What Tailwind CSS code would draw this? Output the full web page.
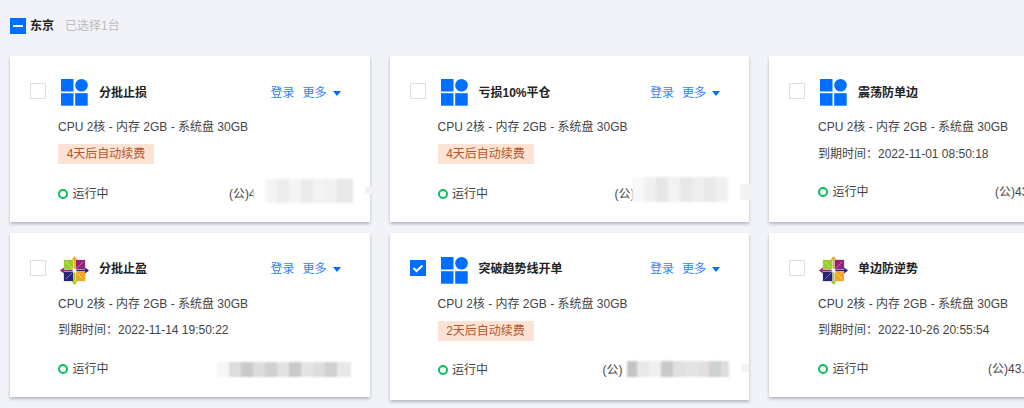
<!DOCTYPE html>
<html lang="zh">
<head>
<meta charset="utf-8">
<script src="https://cdn.jsdelivr.net/npm/@tailwindcss/browser@4"></script>
<title>东京</title>
</head>
<body class="w-[1024px] h-[408px] overflow-hidden bg-[#f1f3f8] font-['Liberation_Sans','Noto_Sans_CJK_SC',sans-serif] text-xs text-[#444]">
<div class="pl-[10px] pt-[18px] w-[1200px]">

  <div class="flex items-center h-4">
    <span class="flex items-center justify-center w-4 h-4 bg-[#006eff]"><span class="w-[10px] h-[2px] bg-white"></span></span>
    <b class="ml-1 font-bold text-[#222]">东京</b>
    <span class="ml-[11px] text-[#bbb]">已选择1台</span>
  </div>

  <div class="flex gap-5 mt-[22px] h-[166px]">
    <!-- card 1 -->
    <div class="w-[359.5px] shrink-0 bg-white shadow-[0_2px_3px_rgba(54,58,80,0.32)]">
      <div class="flex items-start h-[27px] mt-[23px] pl-5 pr-[29px]">
        <span class="mt-1 w-4 h-4 bg-white border border-[#dcdfe8]"></span>
        <svg class="ml-[15px] w-[27px] h-[27px] shrink-0" viewBox="0 0 27 27"><rect width="12.5" height="12.5" fill="#006eff"/><circle cx="20.5" cy="6.300" r="6.300" fill="#006eff"/><rect y="14.200" width="12.5" height="12.5" fill="#006eff"/><rect x="14.200" y="14.200" width="12.5" height="12.5" fill="#006eff"/></svg>
        <div class="flex flex-1 items-center h-5 mt-1 ml-[11px]">
          <b class="font-bold text-[#222]">分批止损</b>
          <span class="ml-auto text-[#2f84ff]">登录</span>
          <span class="ml-2 text-[#2f84ff]">更多</span>
          <svg class="ml-[6px] w-2 h-[5px]" viewBox="0 0 8 5"><path d="M0 0h8L4 5z" fill="#006eff"/></svg>
        </div>
      </div>
      <div class="pl-12 mt-[11px] h-5 leading-5">CPU 2核 - 内存 2GB - 系统盘 30GB</div>
      <div class="ml-12 mt-[7px] w-[96px] h-5 leading-5 text-center bg-[#fde3d3] text-[#b4552d]">4天后自动续费</div>
      <div class="flex items-center pl-12 mt-5 h-5">
        <span class="flex items-center w-[171px]"><span class="w-[10px] h-[10px] rounded-full border-2 border-[#0abf5b]"></span><span class="ml-[4.5px]">运行中</span></span>
        <span class="relative">(公)4
          <span class="absolute left-[24px] top-[-7px] flex w-[100px] h-[24px] bg-white blur-[1px]">
            <span class="w-3 bg-white"></span><span class="w-3 bg-[#f4f4f4]"></span><span class="w-3 bg-[#ececec]"></span><span class="w-3 bg-[#f4f4f4]"></span><span class="w-3 bg-[#ebebeb]"></span><span class="w-3 bg-[#f3f3f3]"></span><span class="w-3 bg-[#f0f0f0]"></span><span class="w-[16px] bg-[#e8e8e8]"></span>
          </span>
          <span class="absolute left-[136px] top-[1px] w-[7px] h-[7px] bg-[#f3f3f3]"></span>
        </span>
      </div>
    </div>
    <!-- card 2 -->
    <div class="w-[359.5px] shrink-0 bg-white shadow-[0_2px_3px_rgba(54,58,80,0.32)]">
      <div class="flex items-start h-[27px] mt-[23px] pl-5 pr-[29px]">
        <span class="mt-1 w-4 h-4 bg-white border border-[#dcdfe8]"></span>
        <svg class="ml-[15px] w-[27px] h-[27px] shrink-0" viewBox="0 0 27 27"><rect width="12.5" height="12.5" fill="#006eff"/><circle cx="20.5" cy="6.300" r="6.300" fill="#006eff"/><rect y="14.200" width="12.5" height="12.5" fill="#006eff"/><rect x="14.200" y="14.200" width="12.5" height="12.5" fill="#006eff"/></svg>
        <div class="flex flex-1 items-center h-5 mt-1 ml-[11px]">
          <b class="font-bold text-[#222]">亏损10%平仓</b>
          <span class="ml-auto text-[#2f84ff]">登录</span>
          <span class="ml-2 text-[#2f84ff]">更多</span>
          <svg class="ml-[6px] w-2 h-[5px]" viewBox="0 0 8 5"><path d="M0 0h8L4 5z" fill="#006eff"/></svg>
        </div>
      </div>
      <div class="pl-12 mt-[11px] h-5 leading-5">CPU 2核 - 内存 2GB - 系统盘 30GB</div>
      <div class="ml-12 mt-[7px] w-[96px] h-5 leading-5 text-center bg-[#fde3d3] text-[#b4552d]">4天后自动续费</div>
      <div class="flex items-center pl-12 mt-5 h-5">
        <span class="flex items-center w-[177px]"><span class="w-[10px] h-[10px] rounded-full border-2 border-[#0abf5b]"></span><span class="ml-[4.5px]">运行中</span></span>
        <span class="relative">(公)
          <span class="absolute left-[17px] top-[-9px] flex w-[96px] h-[25px] bg-white blur-[1px]">
            <span class="w-3 bg-[#f8f8f8]"></span><span class="w-3 bg-[#f0f0f0]"></span><span class="w-3 bg-[#e6e6e6]"></span><span class="w-3 bg-[#f2f2f2]"></span><span class="w-3 bg-[#e8e8e8]"></span><span class="w-3 bg-[#eeeeee]"></span><span class="w-3 bg-[#e9e9e9]"></span><span class="w-3 bg-[#f0f0f0]"></span>
          </span>
          <span class="absolute left-[125px] top-[-2px] w-3 h-[16px] bg-[#f3f3f3]"></span>
        </span>
      </div>
    </div>
    <!-- card 3 -->
    <div class="w-[359.5px] shrink-0 bg-white shadow-[0_2px_3px_rgba(54,58,80,0.32)]">
      <div class="flex items-start h-[27px] mt-[23px] pl-5 pr-[29px]">
        <span class="mt-1 w-4 h-4 bg-white border border-[#dcdfe8]"></span>
        <svg class="ml-[15px] w-[27px] h-[27px] shrink-0" viewBox="0 0 27 27"><rect width="12.5" height="12.5" fill="#006eff"/><circle cx="20.5" cy="6.300" r="6.300" fill="#006eff"/><rect y="14.200" width="12.5" height="12.5" fill="#006eff"/><rect x="14.200" y="14.200" width="12.5" height="12.5" fill="#006eff"/></svg>
        <div class="flex flex-1 items-center h-5 mt-1 ml-[11px]">
          <b class="font-bold text-[#222]">震荡防单边</b>
          <span class="ml-auto text-[#2f84ff]">登录</span>
          <span class="ml-2 text-[#2f84ff]">更多</span>
          <svg class="ml-[6px] w-2 h-[5px]" viewBox="0 0 8 5"><path d="M0 0h8L4 5z" fill="#006eff"/></svg>
        </div>
      </div>
      <div class="pl-[49px] mt-[11px] h-5 leading-5">CPU 2核 - 内存 2GB - 系统盘 30GB</div>
      <div class="pl-[49px] mt-[7px] h-5 leading-5">到期时间：2022-11-01 08:50:18</div>
      <div class="flex items-center pl-[49px] mt-[18px] h-5">
        <span class="flex items-center w-[177px]"><span class="w-[10px] h-[10px] rounded-full border-2 border-[#0abf5b]"></span><span class="ml-[4.5px]">运行中</span></span>
        <span>(公)43.</span>
      </div>
    </div>
  </div>

  <div class="flex items-start gap-5 mt-[11px]">
    <!-- card 4 -->
    <div class="w-[359.5px] h-[164px] shrink-0 bg-white shadow-[0_2px_3px_rgba(54,58,80,0.32)]">
      <div class="flex items-start h-[27px] mt-[24px] pl-5 pr-[29px]">
        <span class="mt-[3px] w-4 h-4 bg-white border border-[#dcdfe8]"></span>
        <svg class="ml-[14px] mt-[-1px] w-[29px] h-[29px] shrink-0" viewBox="0 0 30 30"><rect x="4" y="4" width="9.800" height="9.800" fill="#9ccd2a"/><rect x="16.200" y="4" width="9.800" height="9.800" fill="#932279"/><rect x="16.200" y="16.200" width="9.800" height="9.800" fill="#efa724"/><rect x="4" y="16.200" width="9.800" height="9.800" fill="#262577"/><path d="M6 6l7 7M24 6l-7 7M24 24l-7-7M6 24l7-7" stroke="#fff" stroke-opacity="0.5" stroke-width="0.8"/><path d="M15 0l3 4h-2.200v9h-1.600V4H12z" fill="#efa724"/><path d="M30 15l-4 3v-2.200h-9v-1.600h9V12z" fill="#262577"/><path d="M15 30l-3-4h2.200v-9h1.600v9H18z" fill="#9ccd2a"/><path d="M0 15l4-3v2.200h9v1.600H4V18z" fill="#932279"/></svg>
        <div class="flex flex-1 items-center h-5 mt-[2px] ml-[10px]">
          <b class="font-bold text-[#222]">分批止盈</b>
          <span class="ml-auto text-[#2f84ff]">登录</span>
          <span class="ml-2 text-[#2f84ff]">更多</span>
          <svg class="ml-[6px] w-2 h-[5px]" viewBox="0 0 8 5"><path d="M0 0h8L4 5z" fill="#006eff"/></svg>
        </div>
      </div>
      <div class="pl-12 mt-[10px] h-5 leading-5">CPU 2核 - 内存 2GB - 系统盘 30GB</div>
      <div class="pl-12 mt-[6px] h-5 leading-5">到期时间：2022-11-14 19:50:22</div>
      <div class="flex items-center pl-12 mt-[19px] h-5">
        <span class="flex items-center w-[171px]"><span class="w-[10px] h-[10px] rounded-full border-2 border-[#0abf5b]"></span><span class="ml-[4.5px]">运行中</span></span>
        <span class="relative">(公
          <span class="absolute left-[-12px] top-[1px] flex w-[134px] h-[15px] bg-white blur-[1px]">
            <span class="w-[12px] bg-[#f6f6f6]"></span><span class="w-[12px] bg-[#dddddd]"></span><span class="w-[12px] bg-[#c9c9c9]"></span><span class="w-[12px] bg-[#dcdcdc]"></span><span class="w-[12px] bg-[#d0d0d0]"></span><span class="w-[12px] bg-[#e2e2e2]"></span><span class="w-[12px] bg-[#c9c9c9]"></span><span class="w-[12px] bg-[#e4e4e4]"></span><span class="w-[12px] bg-[#dfdcdc]"></span><span class="w-[12px] bg-[#d0d0d0]"></span><span class="w-[14px] bg-[#e8e8e8]"></span>
          </span>
        </span>
      </div>
    </div>
    <!-- card 5 -->
    <div class="w-[359.5px] h-[167px] shrink-0 bg-white shadow-[0_2px_3px_rgba(54,58,80,0.32)]">
      <div class="flex items-start h-[27px] mt-[24px] pl-5 pr-[29px]">
        <span class="flex items-center justify-center mt-[3px] w-4 h-4 bg-[#006eff]"><svg class="w-3 h-3" viewBox="0 0 12 12"><path d="M1.500 6l3 3 6-5.500" fill="none" stroke="#fff" stroke-width="2"/></svg></span>
        <svg class="ml-[15px] w-[27px] h-[27px] shrink-0" viewBox="0 0 27 27"><rect width="12.5" height="12.5" fill="#006eff"/><circle cx="20.5" cy="6.300" r="6.300" fill="#006eff"/><rect y="14.200" width="12.5" height="12.5" fill="#006eff"/><rect x="14.200" y="14.200" width="12.5" height="12.5" fill="#006eff"/></svg>
        <div class="flex flex-1 items-center h-5 mt-[2px] ml-[11px]">
          <b class="font-bold text-[#222]">突破趋势线开单</b>
          <span class="ml-auto text-[#2f84ff]">登录</span>
          <span class="ml-2 text-[#2f84ff]">更多</span>
          <svg class="ml-[6px] w-2 h-[5px]" viewBox="0 0 8 5"><path d="M0 0h8L4 5z" fill="#006eff"/></svg>
        </div>
      </div>
      <div class="pl-12 mt-[10px] h-5 leading-5">CPU 2核 - 内存 2GB - 系统盘 30GB</div>
      <div class="ml-12 mt-[7px] w-[96px] h-5 leading-5 text-center bg-[#fde3d3] text-[#b4552d]">2天后自动续费</div>
      <div class="flex items-center pl-12 mt-[19px] h-5">
        <span class="flex items-center w-[165px]"><span class="w-[10px] h-[10px] rounded-full border-2 border-[#0abf5b]"></span><span class="ml-[4.5px]">运行中</span></span>
        <span class="relative">(公)
          <span class="absolute left-[24px] top-[-1px] flex w-[102px] h-[16px] bg-white blur-[1px]">
            <span class="w-[10px] bg-[#c4c4c4]"></span><span class="w-3 bg-[#e8e8e8]"></span><span class="w-3 bg-[#f0f0f0]"></span><span class="w-3 bg-[#c9c9c9]"></span><span class="w-3 bg-[#e0e0e0]"></span><span class="w-3 bg-[#e4e4e4]"></span><span class="w-3 bg-[#e3dfe0]"></span><span class="w-3 bg-[#cfd2d2]"></span><span class="w-[8px] bg-[#dddddd]"></span>
          </span>
          <span class="absolute left-[138px] top-[2px] w-2 h-[8px] bg-[#f3f3f3]"></span>
        </span>
      </div>
    </div>
    <!-- card 6 -->
    <div class="w-[359.5px] h-[164px] shrink-0 bg-white shadow-[0_2px_3px_rgba(54,58,80,0.32)]">
      <div class="flex items-start h-[27px] mt-[24px] pl-5 pr-[29px]">
        <span class="mt-[3px] w-4 h-4 bg-white border border-[#dcdfe8]"></span>
        <svg class="ml-[14px] mt-[-1px] w-[29px] h-[29px] shrink-0" viewBox="0 0 30 30"><rect x="4" y="4" width="9.800" height="9.800" fill="#9ccd2a"/><rect x="16.200" y="4" width="9.800" height="9.800" fill="#932279"/><rect x="16.200" y="16.200" width="9.800" height="9.800" fill="#efa724"/><rect x="4" y="16.200" width="9.800" height="9.800" fill="#262577"/><path d="M6 6l7 7M24 6l-7 7M24 24l-7-7M6 24l7-7" stroke="#fff" stroke-opacity="0.5" stroke-width="0.8"/><path d="M15 0l3 4h-2.200v9h-1.600V4H12z" fill="#efa724"/><path d="M30 15l-4 3v-2.200h-9v-1.600h9V12z" fill="#262577"/><path d="M15 30l-3-4h2.200v-9h1.600v9H18z" fill="#9ccd2a"/><path d="M0 15l4-3v2.200h9v1.600H4V18z" fill="#932279"/></svg>
        <div class="flex flex-1 items-center h-5 mt-[2px] ml-[10px]">
          <b class="font-bold text-[#222]">单边防逆势</b>
          <span class="ml-auto text-[#2f84ff]">登录</span>
          <span class="ml-2 text-[#2f84ff]">更多</span>
          <svg class="ml-[6px] w-2 h-[5px]" viewBox="0 0 8 5"><path d="M0 0h8L4 5z" fill="#006eff"/></svg>
        </div>
      </div>
      <div class="pl-[49px] mt-[10px] h-5 leading-5">CPU 2核 - 内存 2GB - 系统盘 30GB</div>
      <div class="pl-[49px] mt-[6px] h-5 leading-5">到期时间：2022-10-26 20:55:54</div>
      <div class="flex items-center pl-[49px] mt-[19px] h-5">
        <span class="flex items-center w-[170px]"><span class="w-[10px] h-[10px] rounded-full border-2 border-[#0abf5b]"></span><span class="ml-[4.5px]">运行中</span></span>
        <span>(公)43.</span>
      </div>
    </div>
  </div>

</div>
</body>
</html>
